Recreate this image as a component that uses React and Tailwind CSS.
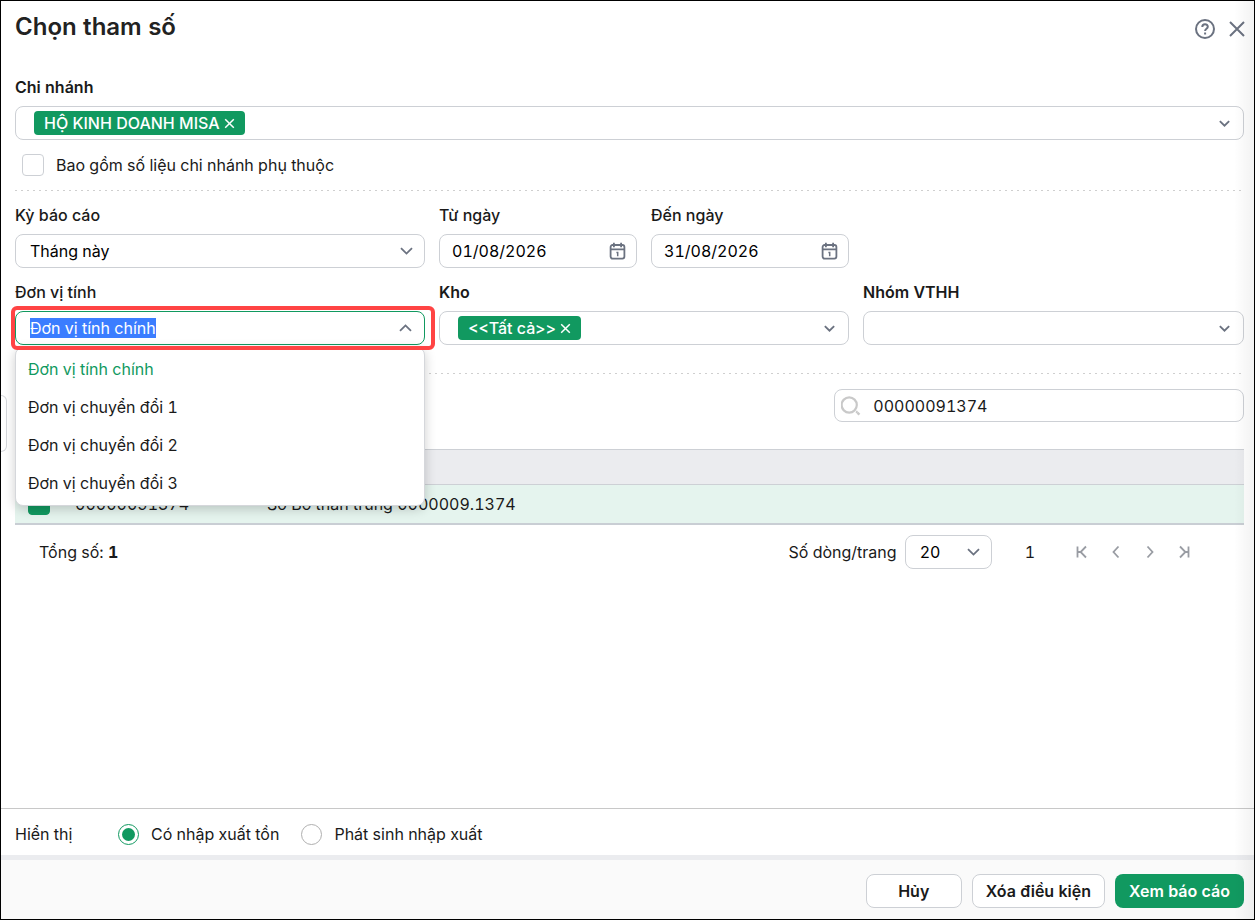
import React, { useEffect, useRef, useState } from 'react';

const UNITS = ['Đơn vị tính chính', 'Đơn vị chuyển đổi 1', 'Đơn vị chuyển đổi 2', 'Đơn vị chuyển đổi 3'];

const Chevron = ({ small, up }) => (
    <svg width={small ? 11 : 13} height={small ? 7 : 8} viewBox="0 0 13 8" fill="none" stroke="#6b7280" strokeWidth={small ? 2.2 : 1.8} className={up ? 'rotate-180' : ''} aria-hidden="true">
        <path d="M1 1.2l5.5 5.4L12 1.2" />
    </svg>
);

const CalendarIcon = () => (
    <svg width="17" height="18" viewBox="0 0 17 18" fill="none" stroke="#6b7280" strokeWidth="1.8" aria-hidden="true">
        <rect x="1.6" y="3" width="13.8" height="13.6" rx="2" />
        <path d="M1.6 7.4h13.8M4.9 0.8v4.4M12.1 0.8v4.4" />
        <path d="M7.4 10.6h1.3v3.6" strokeWidth="1.5" />
    </svg>
);

const PAGE_ICONS = {
    first: 'M2.5 1.5v11M11 1.5L5.6 7l5.4 5.5M2.6 7h3',
    prev: 'M9.5 1.5L4.5 7l5 5.5',
    next: 'M4.5 1.5l5 5.5-5 5.5',
    last: 'M11.5 1.5v11M3 1.5L8.4 7 3 12.5M8.4 7h3',
};

const PageButton = ({ icon, label }) => (
    <button type="button" aria-label={label} className="flex h-6 w-3.5 items-center justify-center">
        <svg width="14" height="14" viewBox="0 0 14 14" fill="none" stroke="#999ca3" strokeWidth="1.8" className="shrink-0" aria-hidden="true">
            <path d={PAGE_ICONS[icon]} />
        </svg>
    </button>
);

const Tag = ({ children }) => (
    <span className="flex h-6 shrink-0 items-center gap-1 rounded bg-[#119960] px-2.5 font-medium text-white">
        {children}
        <button type="button" aria-label="Xóa">
            <svg width="11" height="11" viewBox="0 0 11 11" stroke="#fff" strokeWidth="1.5" aria-hidden="true">
                <path d="M1.2 1.2l8.6 8.6M9.8 1.2L1.2 9.8" />
            </svg>
        </button>
    </span>
);

const TagBox = ({ id, label, tag }) => (
    <div>
        <label htmlFor={id} className="mb-[9px] block h-5 leading-5 font-semibold">{label}</label>
        <div className="flex h-[34px] items-center rounded-lg border border-[#cdd0d5] bg-white pr-[13px] pl-[18px]">
            {tag && <Tag>{tag}</Tag>}
            <input id={id} type="text" className="min-w-0 flex-1 px-2 outline-none" />
            <button type="button" aria-label="Mở danh sách"><Chevron small /></button>
        </div>
    </div>
);

const DateBox = ({ id, label, value }) => (
    <div>
        <label htmlFor={id} className="mb-[9px] block h-5 leading-5 font-medium">{label}</label>
        <div className="flex h-[34px] items-center rounded-lg border border-[#cdd0d5] bg-white pr-2.5 pl-3 text-black">
            <input id={id} type="text" defaultValue={value} className="min-w-0 flex-1 outline-none" />
            <button type="button" aria-label="Chọn ngày"><CalendarIcon /></button>
        </div>
    </div>
);

const DottedLine = () => (
    <svg className="block h-px w-full" aria-hidden="true">
        <line x1="0" y1="0.5" x2="100%" y2="0.5" stroke="#cfcfcf" strokeDasharray="2 4" />
    </svg>
);

const Radio = ({ value, label, checked, onChange }) => (
    <label className="flex items-center gap-3">
        <input
            type="radio"
            name="display"
            value={value}
            checked={checked}
            onChange={() => onChange(value)}
            className="flex size-[21px] appearance-none items-center justify-center rounded-full border border-[#afafaf] checked:border-[#119960] checked:before:size-[13px] checked:before:rounded-full checked:before:bg-[#119960]"
        />
        {label}
    </label>
);

export default function App() {
    const [unit, setUnit] = useState(UNITS[0]);
    const [open, setOpen] = useState(true);
    const [display, setDisplay] = useState('stock');
    const unitRef = useRef(null);

    useEffect(() => {
        unitRef.current.focus();
        unitRef.current.select();
    }, []);

    const chooseUnit = (value) => {
        setUnit(value);
        setOpen(false);
    };

    return (
        <div className="relative flex min-h-screen flex-col border border-black bg-white font-['Inter',sans-serif] text-base leading-6 text-[#1a1a1a] tabular-nums">
            {/* Header */}
            <header className="flex items-start justify-between pt-2.5 pr-2 pl-3.5">
                <h1 className="text-2xl leading-8 font-semibold text-[#222]">Chọn tham số</h1>
                <div className="flex items-center gap-[13px] pt-2">
                    <button type="button" aria-label="Trợ giúp">
                        <svg width="20" height="20" viewBox="0 0 20 20" fill="none" stroke="#6b7280" strokeWidth="2" aria-hidden="true">
                            <circle cx="10" cy="10" r="9" />
                            <path d="M7.3 7.9c0-3.5 5.5-3.4 5.5-.2 0 2-2.7 2.1-2.7 4.2M10.1 13.4v2" />
                        </svg>
                    </button>
                    <button type="button" aria-label="Đóng">
                        <svg width="18" height="18" viewBox="0 0 18 18" fill="none" stroke="#6b7280" strokeWidth="2" aria-hidden="true">
                            <path d="M2 2l14 14M16 2L2 16" />
                        </svg>
                    </button>
                </div>
            </header>

            {/* Filters */}
            <main className="flex-1 pt-[34px] pr-2.5 pl-3.5">
                <TagBox id="branch" label="Chi nhánh" tag="HỘ KINH DOANH MISA" />
                <label className="my-[13px] ml-[7px] flex w-fit items-center gap-3">
                    <input type="checkbox" className="size-[22px] appearance-none rounded border border-[#cdd0d5] bg-white checked:bg-[#119960]" />
                    Bao gồm số liệu chi nhánh phụ thuộc
                </label>

                <DottedLine />

                <div className="mt-3.5 mb-7 grid grid-cols-[minmax(0,410fr)_minmax(0,198fr)_minmax(0,198fr)_minmax(0,381fr)] gap-3.5">
                    <div>
                        <label htmlFor="period" className="mb-[9px] block h-5 leading-5 font-medium">Kỳ báo cáo</label>
                        <div className="relative">
                            <select id="period" className="block h-[34px] w-full appearance-none rounded-lg border border-[#cdd0d5] bg-white pr-8 pl-3.5 text-black">
                                <option>Tháng này</option>
                            </select>
                            <span className="pointer-events-none absolute inset-y-0 right-3 flex items-center"><Chevron /></span>
                        </div>
                    </div>
                    <DateBox id="from" label="Từ ngày" value="01/08/2026" />
                    <DateBox id="to" label="Đến ngày" value="31/08/2026" />
                    <div />

                    <div>
                        <label htmlFor="unit" className="mb-[9px] block h-5 leading-5 font-medium">Đơn vị tính</label>
                        <div className="relative">
                            <div className="flex h-[34px] items-center rounded-lg border border-[#119960] bg-white pr-3 pl-3.5">
                                <input
                                    id="unit"
                                    ref={unitRef}
                                    role="combobox"
                                    aria-expanded={open}
                                    aria-controls="unit-list"
                                    type="text"
                                    value={unit}
                                    onChange={(e) => setUnit(e.target.value)}
                                    className="min-w-0 flex-1 leading-5 outline-none selection:bg-[#3b7dff] selection:text-white"
                                />
                                <button type="button" aria-label="Mở danh sách" onClick={() => setOpen(!open)}>
                                    <Chevron up={open} />
                                </button>
                            </div>
                            {open && (
                                <ul id="unit-list" role="listbox" className="absolute inset-x-0 top-9 z-10 rounded-lg border border-[#d5d7db] bg-white pt-0.5 pb-[3px] shadow-[0_3px_12px_rgba(0,0,0,0.2)]">
                                    {UNITS.map((u) => (
                                        <li
                                            key={u}
                                            role="option"
                                            aria-selected={u === unit}
                                            onClick={() => chooseUnit(u)}
                                            className={`flex h-[38px] items-center px-3 ${u === unit ? 'text-[#119960]' : ''}`}
                                        >
                                            {u}
                                        </li>
                                    ))}
                                </ul>
                            )}
                            <div className="pointer-events-none absolute -top-[5px] -right-2.5 -bottom-[5px] -left-1 z-20 rounded-md border-4 border-[#ff4444]" />
                        </div>
                    </div>
                    <div className="col-span-2">
                        <TagBox id="stock" label="Kho" tag="<<Tất cả>>" />
                    </div>
                    <TagBox id="group" label="Nhóm VTHH" />
                </div>

                <DottedLine />

                {/* Items */}
                <div className="mt-[15px] flex justify-end">
                    <div className="flex h-[33px] w-1/3 items-center gap-3 rounded-lg border border-[#cdd0d5] bg-white pl-1.5">
                        <svg width="20" height="20" viewBox="0 0 20 20" fill="none" stroke="#c9c9c9" strokeWidth="2.2" aria-hidden="true">
                            <circle cx="8.2" cy="9" r="7.6" />
                            <path d="M15 15.6l1.5.6M16.4 16.6l2 2.1" strokeWidth="2.4" />
                        </svg>
                        <input type="text" aria-label="Tìm kiếm" defaultValue="00000091374" className="min-w-0 flex-1 outline-none" />
                    </div>
                </div>

                <table className="mt-[27px] w-full table-fixed border-collapse">
                    <thead>
                        <tr className="h-[35px] border-y border-[#cdd0d5] bg-[#ebecef]">
                            <th className="w-12" />
                            <th className="w-48" />
                            <th />
                        </tr>
                    </thead>
                    <tbody>
                        <tr className="h-[39px] border-b-2 border-[#c9ced4] bg-[#e5f4ee]">
                            <td className="pl-[13px]">
                                <input type="checkbox" aria-label="Chọn dòng" defaultChecked className="block size-[22px] appearance-none rounded border border-[#cdd0d5] checked:border-[#119960] checked:bg-[#119960]" />
                            </td>
                            <td className="pl-3">00000091374</td>
                            <td className="pl-3">Số Bố thân trung 0000009.1374</td>
                        </tr>
                    </tbody>
                </table>

                <div className="mt-2.5 flex items-center justify-between pr-[53px] pl-6">
                    <p>Tổng số: <b className="font-bold">1</b></p>
                    <div className="flex items-center">
                        <label htmlFor="page-size">Số dòng/trang</label>
                        <div className="relative ml-2">
                            <select id="page-size" className="block h-[34px] w-[87px] appearance-none rounded-lg border border-[#cdd0d5] bg-white pl-3.5 text-black">
                                <option>20</option>
                            </select>
                            <span className="pointer-events-none absolute inset-y-0 right-3 flex items-center"><Chevron /></span>
                        </div>
                        <span className="ml-[33px]">1</span>
                        <div className="ml-10 flex items-center gap-5">
                            <PageButton icon="first" label="Trang đầu" />
                            <PageButton icon="prev" label="Trang trước" />
                            <PageButton icon="next" label="Trang sau" />
                            <PageButton icon="last" label="Trang cuối" />
                        </div>
                    </div>
                </div>
            </main>

            {/* Display options */}
            <div role="radiogroup" aria-labelledby="display-label" className="flex h-[47px] items-center border-t border-[#c8c8c8] pt-1 pl-3.5">
                <span id="display-label" className="w-[103px]">Hiển thị</span>
                <div className="flex gap-[22px]">
                    <Radio value="stock" label="Có nhập xuất tồn" checked={display === 'stock'} onChange={setDisplay} />
                    <Radio value="moving" label="Phát sinh nhập xuất" checked={display === 'moving'} onChange={setDisplay} />
                </div>
            </div>

            <footer className="flex justify-end gap-2.5 border-t-[5px] border-[#ebecef] bg-[#fafafa] pt-3.5 pr-2.5 pb-[11px] font-semibold">
                <button type="button" className="h-[34px] w-24 rounded-lg border border-[#cdd0d5] bg-white">Hủy</button>
                <button type="button" className="h-[34px] rounded-lg border border-[#cdd0d5] bg-white px-[13px]">Xóa điều kiện</button>
                <button type="button" className="h-[34px] rounded-lg bg-[#119960] px-3.5 text-white">Xem báo cáo</button>
            </footer>

            {/* Handle of the collapsed side panel */}
            <button type="button" aria-label="Mở rộng" className="absolute top-[394px] left-0 h-[57px] w-1.5 rounded-r-md border border-l-0 border-[#d5d7db] bg-white" />
            <div className="pointer-events-none absolute inset-y-0 right-0 w-5 bg-linear-to-l from-black/5 to-transparent" />
        </div>
    );
}
